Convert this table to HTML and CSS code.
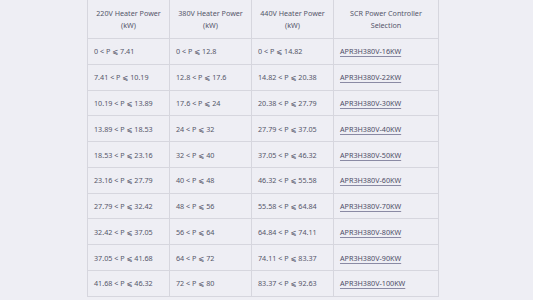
FILE: index.html
```html
<!DOCTYPE html>
<html>
<head>
<meta charset="utf-8">
<link rel="stylesheet" href="styles.css">
</head>
<body>
<div class="page">
<table class="spec">
<colgroup><col class="c1"><col class="c2"><col class="c3"><col class="c4"></colgroup>
<thead>
<tr><th>220V Heater Power (kW)</th><th>380V Heater Power (kW)</th><th>440V Heater Power (kW)</th><th>SCR Power Controller Selection</th></tr>
</thead>
<tbody>
<tr><td>0 &lt; P ⩽ 7.41</td><td>0 &lt; P ⩽ 12.8</td><td>0 &lt; P ⩽ 14.82</td><td><a href="#">APR3H380V-16KW</a></td></tr>
<tr><td>7.41 &lt; P ⩽ 10.19</td><td>12.8 &lt; P ⩽ 17.6</td><td>14.82 &lt; P ⩽ 20.38</td><td><a href="#">APR3H380V-22KW</a></td></tr>
<tr><td>10.19 &lt; P ⩽ 13.89</td><td>17.6 &lt; P ⩽ 24</td><td>20.38 &lt; P ⩽ 27.79</td><td><a href="#">APR3H380V-30KW</a></td></tr>
<tr><td>13.89 &lt; P ⩽ 18.53</td><td>24 &lt; P ⩽ 32</td><td>27.79 &lt; P ⩽ 37.05</td><td><a href="#">APR3H380V-40KW</a></td></tr>
<tr><td>18.53 &lt; P ⩽ 23.16</td><td>32 &lt; P ⩽ 40</td><td>37.05 &lt; P ⩽ 46.32</td><td><a href="#">APR3H380V-50KW</a></td></tr>
<tr><td>23.16 &lt; P ⩽ 27.79</td><td>40 &lt; P ⩽ 48</td><td>46.32 &lt; P ⩽ 55.58</td><td><a href="#">APR3H380V-60KW</a></td></tr>
<tr><td>27.79 &lt; P ⩽ 32.42</td><td>48 &lt; P ⩽ 56</td><td>55.58 &lt; P ⩽ 64.84</td><td><a href="#">APR3H380V-70KW</a></td></tr>
<tr><td>32.42 &lt; P ⩽ 37.05</td><td>56 &lt; P ⩽ 64</td><td>64.84 &lt; P ⩽ 74.11</td><td><a href="#">APR3H380V-80KW</a></td></tr>
<tr><td>37.05 &lt; P ⩽ 41.68</td><td>64 &lt; P ⩽ 72</td><td>74.11 &lt; P ⩽ 83.37</td><td><a href="#">APR3H380V-90KW</a></td></tr>
<tr><td>41.68 &lt; P ⩽ 46.32</td><td>72 &lt; P ⩽ 80</td><td>83.37 &lt; P ⩽ 92.63</td><td><a href="#">APR3H380V-100KW</a></td></tr>
</tbody>
</table>
</div>
</body>
</html>
```
FILE: styles.css
```css
html, body {
  margin: 0;
  padding: 0;
  background: #eeeef4;
  overflow: hidden;
}
.page {
  padding-left: 87px;
  margin-top: -1px;
}
.spec {
  border-collapse: collapse;
  table-layout: fixed;
  width: 351px;
  font-family: "Noto Sans", "DejaVu Sans", sans-serif;
  font-size: 7.2px;
  line-height: 12px;
  color: #55566a;
}
.c1, .c2, .c3 { width: 82px; }
.c4 { width: 105px; }
.spec th, .spec td {
  border: 1px solid #d6d6de;
  padding: 6.4px 6px;
  text-align: left;
  font-weight: normal;
  white-space: nowrap;
}
.spec th {
  text-align: center;
  white-space: normal;
  padding: 7px 3px;
}
.spec a {
  color: #4d4d66;
  text-decoration: underline;
  text-decoration-color: #8a8aa4;
  text-decoration-thickness: 1px;
  text-underline-offset: 1.5px;
}
```
